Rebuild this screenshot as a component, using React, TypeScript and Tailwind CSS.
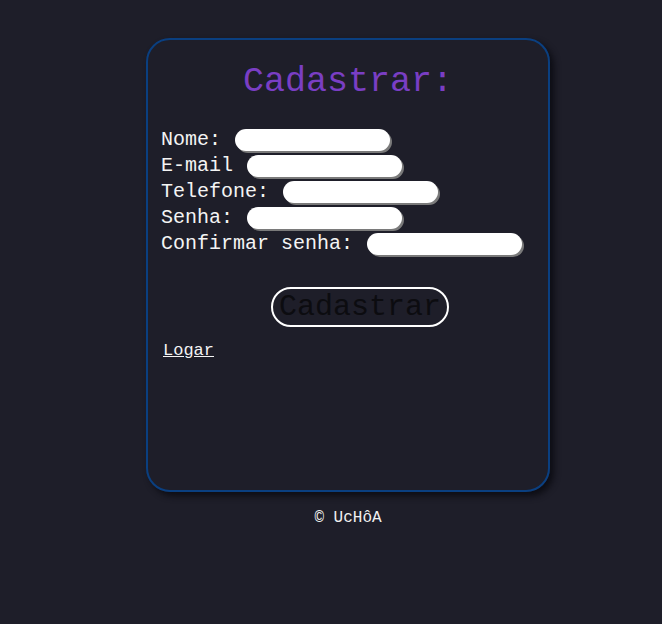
import React from 'react';

const fields = [
  { label: 'Nome:', type: 'text' },
  { label: 'E-mail', type: 'email' },
  { label: 'Telefone:', type: 'tel' },
  { label: 'Senha:', type: 'password' },
  { label: 'Confirmar senha:', type: 'password' },
];

const Field: React.FC<{ label: string; type: string }> = ({ label, type }) => (
  <div className="flex items-center h-[26px] whitespace-pre">
    <label className="text-[20px] leading-[26px] text-[#f4f4f4]">{label + ' '}</label>
    <input
      type={type}
      className="ml-[2px] w-[155px] h-[22px] rounded-full bg-white border-0 outline-none shadow-[2px_2px_0_#7a7a7a]"
    />
  </div>
);

export default function App() {
  return (
    <div
      className="min-h-[624px] bg-[#1e1e29] pl-[34px] flex flex-col items-center pt-[38px]"
      style={{ fontFamily: '"Liberation Mono", "Courier New", monospace' }}
    >
      <div className="w-[404px] h-[454px] rounded-[24px] border-2 border-[#0a3f80] shadow-[4px_4px_6px_#0d0d14] pt-[22px] px-[13px]">
        <h1 className="text-center text-[35px] leading-[40px] text-[#7a3ec4] font-normal">Cadastrar:</h1>
        <div className="mt-[25px] flex flex-col">
          {fields.map((f) => (
            <Field key={f.label} label={f.label} type={f.type} />
          ))}
        </div>
        <div className="mt-[30px] flex justify-center">
          <button className="ml-[24px] h-[40px] px-[6px] rounded-full border-2 border-white bg-transparent text-[30px] leading-[36px] text-[#0c0c10]">
            Cadastrar
          </button>
        </div>
        <div className="mt-[12px] pl-[2px]">
          <a href="#" className="text-[17px] leading-[20px] text-[#f4f4f4] underline">Logar</a>
        </div>
      </div>
      <p className="mt-[16px] text-[16px] leading-[20px] text-[#f0f0f0]">© UcHôA</p>
    </div>
  );
}
